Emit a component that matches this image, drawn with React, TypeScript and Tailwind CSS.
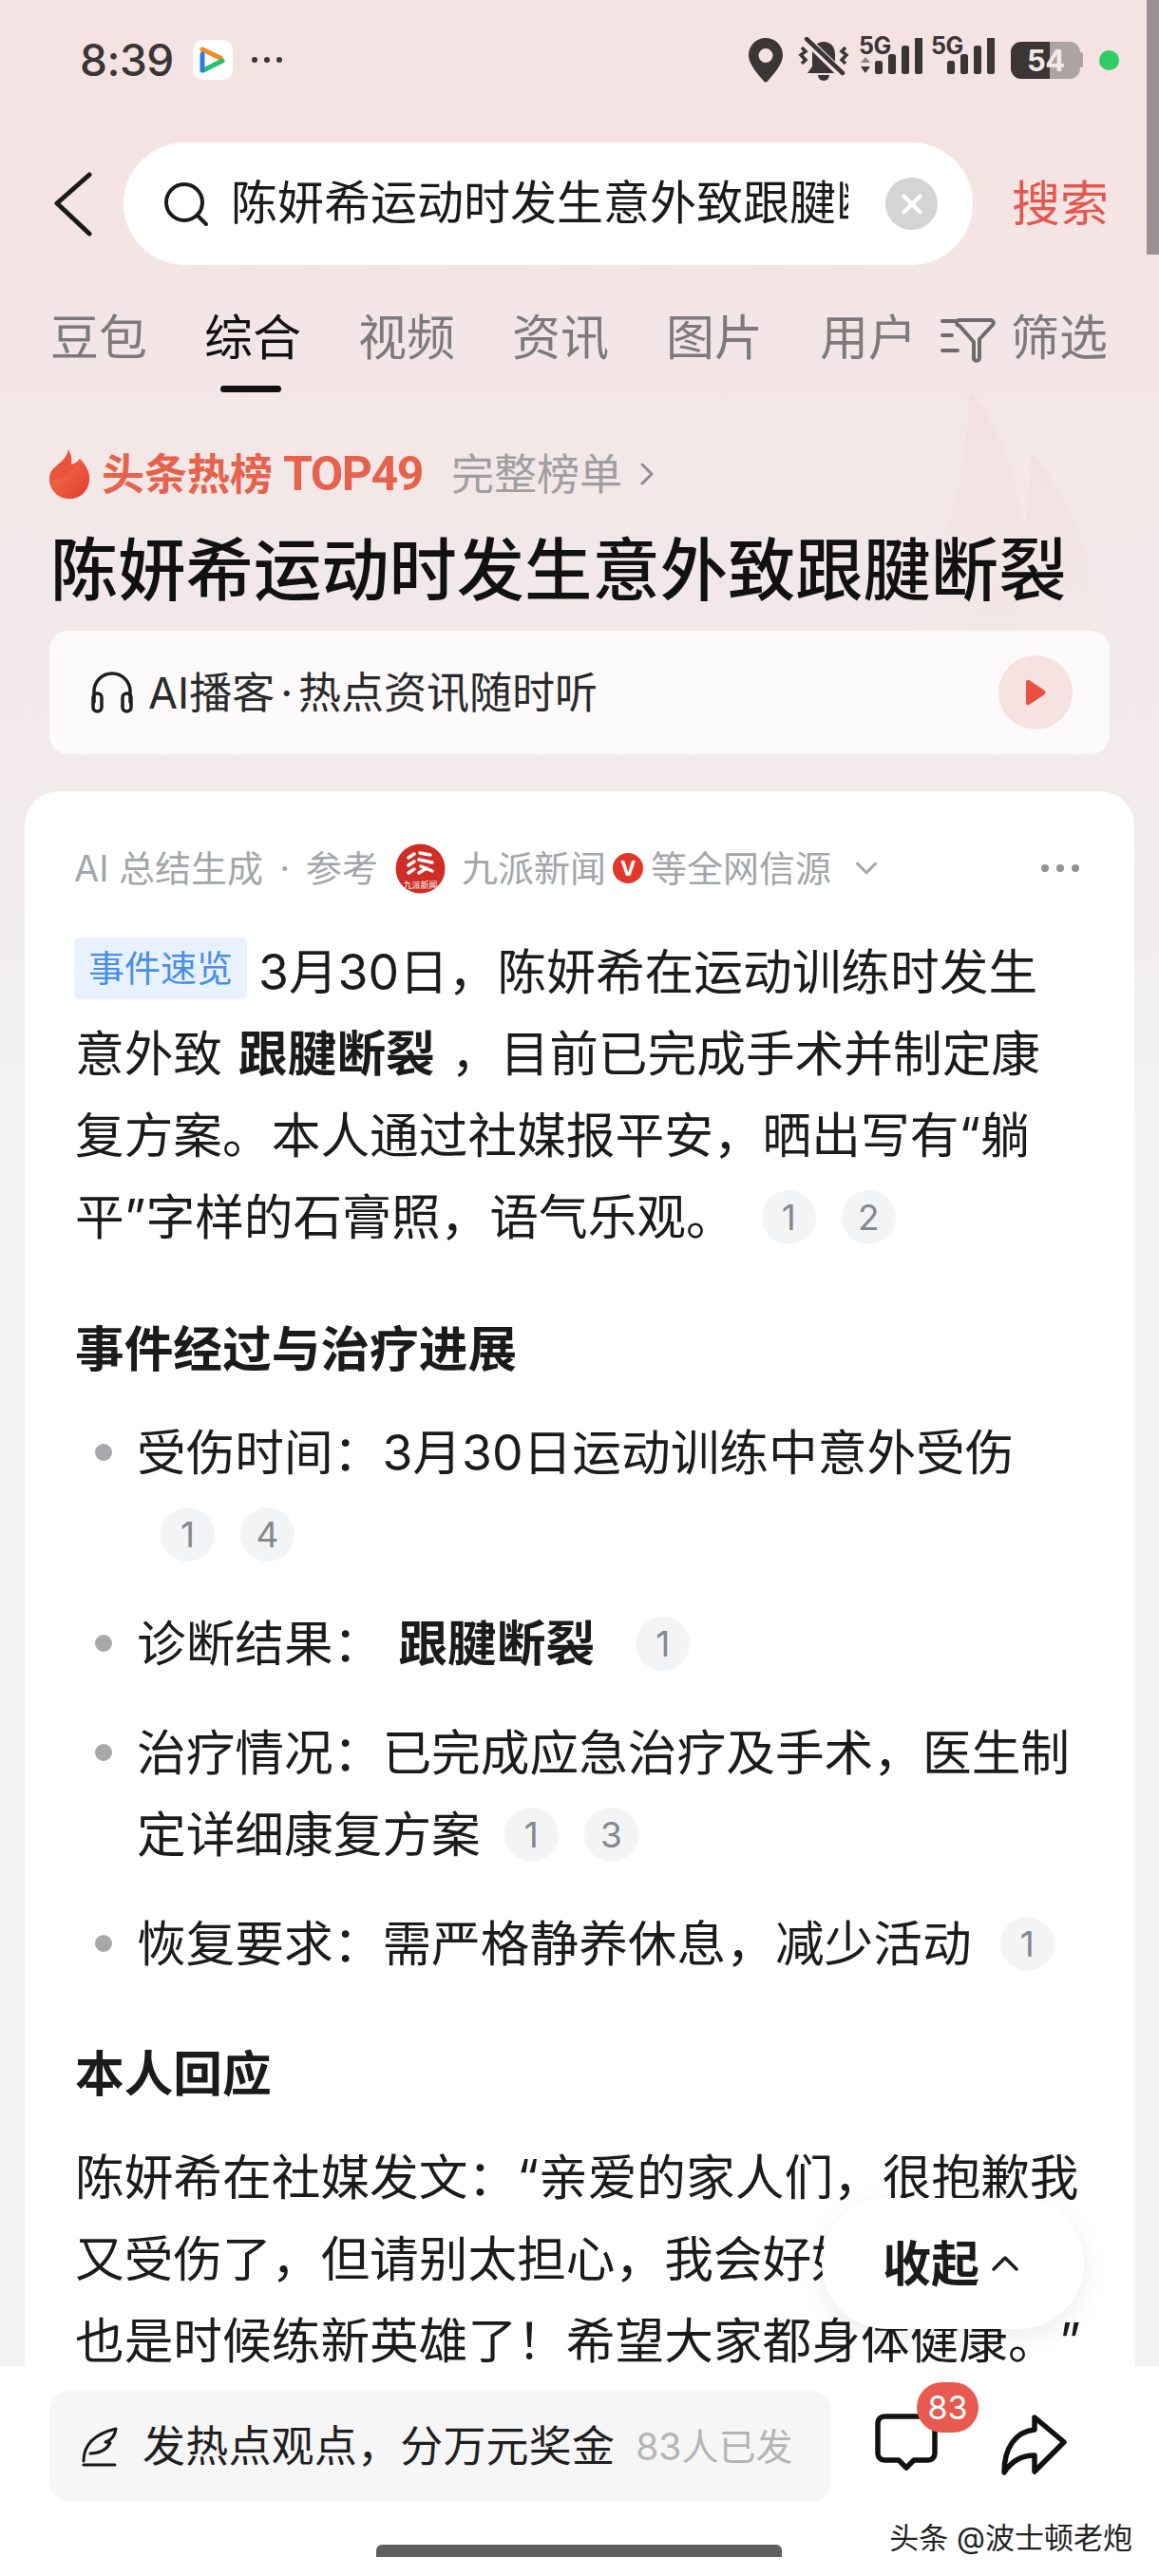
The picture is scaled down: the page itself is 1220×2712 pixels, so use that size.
import { ChevronDown, ChevronRight, X } from 'lucide-react'

const Cite = ({ n }: { n: number }) => (
  <span className="relative -top-[4px] inline-flex w-[57px] h-[57px] rounded-full bg-[#f3f4f5] text-[#85888d] text-[37px] leading-none items-center justify-center align-middle ml-[27px] first:ml-0">
    {n}
  </span>
)

const Signal = ({ arrows }: { arrows?: boolean }) => (
  <div className="relative w-[68px] h-[46px]">
    <span className="absolute left-0 top-[-5px] text-[25px] leading-[26px] font-bold tracking-[-0.5px] text-[#3b3535]">5G</span>
    <svg width="68" height="46" viewBox="0 0 68 46" fill="#3b3535">
      {arrows && <path d="M2 30 L12 30 L7 37 Z" fill="#3b3535" />}
      {arrows && <path d="M2 26 L7 20 L12 26 Z" fill="#8d8585" />}
      <rect x="17" y="24" width="8" height="14" rx="2.5" />
      <rect x="31" y="17" width="8" height="21" rx="2.5" />
      <rect x="45" y="8" width="8" height="30" rx="2.5" />
      <rect x="59" y="-2" width="8" height="40" rx="2.5" />
    </svg>
  </div>
)

const StatusBar = () => (
  <div className="h-[126px] flex items-center pl-[84px] pr-[42px] text-[#3b3535]">
    <span className="text-[46px] leading-none font-medium tracking-[-0.5px]">8:39</span>
    <div className="w-[42px] h-[42px] rounded-[10px] bg-white ml-[20px] flex items-center justify-center">
      <svg width="30" height="32" viewBox="0 0 30 32" fill="none" strokeLinecap="round" strokeWidth="5">
        <path d="M4 5 L23 14" stroke="#f08a24" />
        <path d="M25 17 L5 27" stroke="#25c26e" />
        <path d="M4 10 L4 27" stroke="#2a7de1" />
      </svg>
    </div>
    <div className="flex gap-[7px] ml-[20px]">
      <span className="w-[6px] h-[6px] rounded-full bg-[#3b3535]" />
      <span className="w-[6px] h-[6px] rounded-full bg-[#3b3535]" />
      <span className="w-[6px] h-[6px] rounded-full bg-[#3b3535]" />
    </div>
    <div className="ml-auto flex items-center">
      <svg width="38" height="48" viewBox="0 0 38 48">
        <path fillRule="evenodd" fill="#3b3535" d="M19 1C9 1 1 9 1 19c0 10 10 20 16 27.500a2.600 2.600 0 0 0 4 0C27 39 37 29 37 19 37 9 29 1 19 1Zm0 11a7.500 7.500 0 1 1 0 15 7.500 7.500 0 0 1 0-15Z" />
      </svg>
      <svg className="ml-[15px]" width="54" height="48" viewBox="0 0 54 48" fill="none">
        <path fill="#3b3535" d="M27 5c7 0 12 5 12 13v11l5 9H10l5-7V18c0-8 5-13 12-13Z" />
        <path fill="#3b3535" d="M21 40h12a6 6 0 0 1-12 0Z" />
        <path d="M8 2 L47 40" stroke="#f5e3e3" strokeWidth="9" />
        <path d="M9 2 L47 38" stroke="#3b3535" strokeWidth="4.500" strokeLinecap="round" />
        <path d="M4 11l4 4-5 4 5 5-4 4" stroke="#3b3535" strokeWidth="3.500" />
        <path d="M50 11l-4 4 5 4-5 5 4 4" stroke="#3b3535" strokeWidth="3.500" />
      </svg>
      <div className="ml-[10px]"><Signal arrows /></div>
      <div className="ml-[8px]"><Signal /></div>
      <div className="relative ml-[16px] w-[76px] h-[39px] flex">
        <div className="w-[41px] h-full bg-[#3b3535] rounded-l-[11px]" />
        <div className="w-[32px] h-full bg-[#ada3a2] rounded-r-[11px]" />
        <div className="w-[3px] h-[16px] bg-[#ada3a2] rounded-r-[2px] self-center" />
        <span className="absolute left-[17px] top-0 text-[31px] leading-[39px] font-bold text-[#f2e8e6] tracking-[-0.5px]">54</span>
      </div>
      <span className="w-[21px] h-[21px] rounded-full bg-[#2fcb64] ml-[17px]" />
    </div>
  </div>
)

const SearchRow = () => (
  <div className="mt-[24px] h-[129px] flex items-center">
    <svg className="ml-[57px]" width="40" height="68" viewBox="0 0 40 68" fill="none" stroke="#1a1a1a" strokeWidth="5" strokeLinecap="round" strokeLinejoin="round">
      <path d="M37 3 3 33l34 32" />
    </svg>
    <div className="ml-[33px] w-[894px] h-full rounded-full bg-white flex items-center">
      <svg className="ml-[42px]" width="48" height="48" viewBox="0 0 48 48" fill="none" stroke="#1a1a1a" strokeWidth="4" strokeLinecap="round">
        <circle cx="22" cy="22" r="19" />
        <path d="M36 36l9 9" />
      </svg>
      <div className="ml-[23px] w-[650px] h-[62px] overflow-hidden whitespace-nowrap text-[49px] leading-[60px] text-[#1a1a1a]">
        陈妍希运动时发生意外致跟腱断裂
      </div>
      <div className="ml-[39px] w-[55px] h-[55px] rounded-full bg-[#d4d4d6] flex items-center justify-center">
        <X className="w-[34px] h-[34px] text-white" strokeWidth={3} />
      </div>
    </div>
    <span className="ml-[41px] text-[51px] leading-none text-[#e5574d]">搜索</span>
  </div>
)

const TabBar = () => (
  <div className="mt-[44px] h-[90px] flex pl-[53px] text-[51px] leading-[66px] text-[#7d7a7b]">
    <div className="flex gap-[60px]">
      <span>豆包</span>
      <div className="relative text-[#111]">
        综合
        <span className="absolute left-[17px] top-[83px] w-[64px] h-[7px] rounded-full bg-[#111]" />
      </div>
      <span>视频</span>
      <span>资讯</span>
      <span>图片</span>
      <span>用户</span>
    </div>
    <div className="flex items-start ml-[25px]">
      <svg className="mt-[10px]" width="58" height="50" viewBox="0 0 58 50" fill="none" stroke="#6f6c6d" strokeWidth="4" strokeLinecap="round" strokeLinejoin="round">
        <path d="M2 5h14M2 20h10M2 36h16" />
        <path d="M20 4h33a3 3 0 0 1 2 5L41 24v20a3 3 0 0 1-5 2l-1-1V27L20 10a3 3 0 0 1 0-6Z" />
      </svg>
      <span className="ml-[16px]">筛选</span>
    </div>
  </div>
)

const HotRow = () => (
  <div className="mt-[56px] h-[60px] flex items-center pl-[52px]">
    <svg width="42" height="52" viewBox="0 0 42 52">
      <defs>
        <linearGradient id="flameA" x1="0" y1="0" x2="1" y2="1">
          <stop offset="0" stopColor="#f2754e" />
          <stop offset="1" stopColor="#e23a2c" />
        </linearGradient>
      </defs>
      <path fill="#e8553a" d="M20 0c3 6 4 10 3 16 4-1 7-3 9-6 6 6 10 13 10 21 0 12-9 21-21 21S0 43 0 31c0-6 3-10 8-14 6-5 11-10 12-17Z" />
      <path fill="url(#flameA)" d="M2 32c5-1 12-1 18-6 5-4 9-9 12-16 6 6 10 13 10 21 0 12-9 21-21 21-10 0-19-8-19-20Z" />
    </svg>
    <span className="ml-[13px] text-[45px] leading-none font-bold text-[#e5634c]">头条热榜</span>
    <span className="ml-[11px] text-[50px] leading-none font-bold text-[#e5634c] font-['Roboto',sans-serif] tracking-[-1.500px]">TOP49</span>
    <span className="ml-[30px] text-[45px] leading-none text-[#a09e9f]">完整榜单</span>
    <ChevronRight className="ml-[6px] w-[40px] h-[40px] text-[#8f8d8e]" strokeWidth={1.8} />
  </div>
)

const PodcastCard = () => (
  <div className="mt-[19px] mx-[52px] h-[130px] rounded-[20px] bg-white/75 flex items-center pl-[43px] pr-[39px]">
    <svg width="46" height="44" viewBox="0 0 46 44" fill="none" stroke="#1f1f1f" strokeWidth="3.500" strokeLinecap="round">
      <path d="M4 32V21a19 19 0 0 1 38 0v11" />
      <rect x="3" y="23" width="9" height="19" rx="4.500" />
      <rect x="34" y="23" width="9" height="19" rx="4.500" />
    </svg>
    <span className="ml-[15px] text-[45px] leading-none text-[#2a2a2a]">AI播客<span className="mx-[6px]">·</span>热点资讯随时听</span>
    <div className="ml-auto w-[78px] h-[78px] rounded-full bg-[#f6e3e1] flex items-center justify-center">
      <svg width="24" height="28" viewBox="0 0 24 28"><path fill="#e9503f" d="M2 3.500C2 1 4 0 6 1.500l15 10c2 1.300 2 3.700 0 5l-15 10C4 28 2 27 2 24.500Z" /></svg>
    </div>
  </div>
)

const SourceRow = () => (
  <div className="h-[50px] -ml-[1px] mr-[28px] flex items-center text-[38px] leading-none text-[#a3a6aa]">
    <span>AI 总结生成</span>
    <span className="ml-[17px]">·</span>
    <span className="ml-[17px]">参考</span>
    <svg className="ml-[18px]" width="53" height="53" viewBox="0 0 53 53">
      <circle cx="26.500" cy="26.500" r="26" fill="#cf2d25" />
      <g stroke="#fff" strokeWidth="3.500" strokeLinecap="round">
        <path d="M20 11l-6 4M20 19l-6 4M20 27l-6 4M26 10l11 2M25 17l14 3M27 24l12 5M25 31l8-5" />
      </g>
      <text x="26.500" y="47" textAnchor="middle" fontSize="9" fill="#fff">九派新闻</text>
    </svg>
    <span className="ml-[17px]">九派新闻</span>
    <span className="ml-[7px] w-[32px] h-[32px] rounded-full bg-[#e0372a] text-white text-[22px] font-bold flex items-center justify-center">V</span>
    <span className="ml-[8px]">等全网信源</span>
    <ChevronDown className="ml-[18px] w-[38px] h-[38px] text-[#a3a6aa]" strokeWidth={2} />
    <div className="ml-auto flex gap-[8px]">
      <span className="w-[8px] h-[8px] rounded-full bg-[#8f9296]" />
      <span className="w-[8px] h-[8px] rounded-full bg-[#8f9296]" />
      <span className="w-[8px] h-[8px] rounded-full bg-[#8f9296]" />
    </div>
  </div>
)

const Bullet = ({ children }: { children: React.ReactNode }) => (
  <li className="relative pl-[65px]">
    <span className="absolute left-[21px] top-[34px] w-[18px] h-[18px] rounded-full bg-[#a8a8aa]" />
    {children}
  </li>
)

const Summary = () => (
  <div className="mx-[26px] rounded-t-[36px] bg-white pt-[56px] pl-[53px] pr-[30px] whitespace-nowrap text-[51.700px] leading-[86px] text-[#1b1b1b]">
    <SourceRow />
    <p className="mt-[41px]">
      <span className="inline-flex h-[65px] w-[182px] mr-[12px] -ml-[1px] rounded-[6px] bg-[#e8f2fe] text-[#4a8fe7] text-[38px] leading-none items-center justify-center align-[9px]">事件速览</span>
      3月30日，陈妍希在运动训练时发生<br />
      意外致<b className="font-bold mx-[17px]">跟腱断裂</b>，目前已完成手术并制定康<br />
      复方案。本人通过社媒报平安，晒出写有“躺<br />
      平”字样的石膏照，语气乐观。
      <span className="ml-[28px]"><Cite n={1} /><Cite n={2} /></span>
    </p>
    <h3 className="mt-[53px] font-bold">事件经过与治疗进展</h3>
    <ul className="mt-[23px] flex flex-col gap-[29px]">
      <Bullet>
        受伤时间：3月30日运动训练中意外受伤<br />
        <span className="ml-[25px]"><Cite n={1} /><Cite n={4} /></span>
      </Bullet>
      <Bullet>
        诊断结果：<b className="font-bold ml-[17px] mr-[16px]">跟腱断裂</b><Cite n={1} />
      </Bullet>
      <Bullet>
        治疗情况：已完成应急治疗及手术，医生制<br />
        定详细康复方案<span className="ml-[25px]"><Cite n={1} /><Cite n={3} /></span>
      </Bullet>
      <Bullet>
        恢复要求：需严格静养休息，减少活动<span className="ml-[30px]"><Cite n={1} /></span>
      </Bullet>
    </ul>
    <h3 className="mt-[51px] font-bold">本人回应</h3>
    <p className="mt-[23px]">
      陈妍希在社媒发文：“亲爱的家人们，很抱歉我<br />
      又受伤了，但请别太担心，我会好好养伤，这<br />
      也是时候练新英雄了！希望大家都身体健康。<span className="ml-[28px]">”</span>
    </p>
  </div>
)

const BottomBar = () => (
  <div className="relative h-[221px] shrink-0 bg-white pt-[26px] pl-[52px]">
    <div className="flex items-start">
      <div className="w-[823px] h-[117px] rounded-[22px] bg-[#f6f6f7] flex items-center pl-[33px]">
        <svg width="40" height="42" viewBox="0 0 40 42" fill="none" stroke="#1a1a1a" strokeWidth="3" strokeLinecap="round" strokeLinejoin="round">
          <path d="M3 36C3 20 12 8 37 2c-1 8-5 12-11 14 2 0 4 0 5 1-4 7-11 11-21 11" />
          <path d="M3 40h33" />
        </svg>
        <span className="ml-[25px] text-[45px] leading-none tracking-[0.2px] text-[#1f1f1f]">发热点观点，分万元奖金</span>
        <span className="ml-[22px] text-[39px] leading-none text-[#b4b4b6]">83人已发</span>
      </div>
      <div className="relative ml-[46px] mt-[24px] w-[66px] h-[60px]">
        <svg width="68" height="62" viewBox="0 0 68 62" fill="none" stroke="#111" strokeWidth="5.500" strokeLinejoin="round">
          <path d="M10 3h46a7 7 0 0 1 7 7v32a7 7 0 0 1-7 7H41l-8 8-8-8H10a7 7 0 0 1-7-7V10a7 7 0 0 1 7-7Z" />
        </svg>
        <span className="absolute left-[44px] top-[-33px] w-[65px] h-[53px] rounded-full bg-[#e85a4f] text-white text-[34px] leading-none flex items-center justify-center">83</span>
      </div>
      <svg className="ml-[67px] mt-[25px]" width="70" height="64" viewBox="0 0 70 64" fill="none" stroke="#111" strokeWidth="5.500" strokeLinejoin="round">
        <path d="M35 3 66 29 35 60V43C20 43 10 50 3 61 3 35 15 18 35 16Z" />
      </svg>
    </div>
    <span className="absolute right-[28px] top-[161px] text-[31px] leading-[40px] text-[#222] [text-shadow:1px_1px_1px_#fff]">头条 @波士顿老炮</span>
    <div className="absolute left-[396px] top-[188px] w-[427px] h-[13px] rounded-t-[6px] bg-[#5f5f5f]" />
  </div>
)

export default function App() {
  return (
    <div className="relative w-[1220px] h-[2712px] overflow-hidden flex flex-col font-['Inter','Noto_Sans_CJK_SC',sans-serif] bg-gradient-to-b from-[#f5e2e2] via-[#f2eaeb] via-30% to-[#f2f3f5] to-45%">
      {/* faint flames behind the hot list header */}
      <svg className="absolute left-[960px] top-[412px]" width="230" height="300" viewBox="0 0 230 300">
        <defs>
          <linearGradient id="fadeFlame" x1="0" y1="0" x2="0" y2="1">
            <stop offset="0" stopColor="#f0d9d6" stopOpacity="0.45" />
            <stop offset="1" stopColor="#f2e4e0" stopOpacity="0" />
          </linearGradient>
        </defs>
        <path fill="url(#fadeFlame)" d="M60 0c30 30 55 90 58 170 4 60-10 110-40 150H10C-10 260 10 210 30 160 50 110 60 50 60 0Z" />
        <path fill="url(#fadeFlame)" d="M125 62c40 50 70 120 70 180 0 30-6 60-20 78H55c-14-40 0-80 30-110 30-30 42-90 40-148Z" />
      </svg>

      <div className="relative flex-1 overflow-hidden">
        <StatusBar />
        <SearchRow />
        <TabBar />
        <HotRow />
        <h1 className="mt-[26px] pl-[53px] text-[71.300px] leading-[90px] font-medium text-[#111] whitespace-nowrap">陈妍希运动时发生意外致跟腱断裂</h1>
        <PodcastCard />
        <div className="h-[39px]" />
        <Summary />
      </div>

      <BottomBar />

      {/* scroll indicator */}
      <div className="absolute right-0 top-0 w-[13px] h-[268px] bg-[#9b9094]" />

      {/* floating collapse button */}
      <div className="absolute left-[865px] top-[2314px] w-[276px] h-[138px] rounded-full bg-white shadow-[0_8px_30px_rgba(0,0,0,0.08)] flex items-center pl-[64px]">
        <span className="text-[51px] leading-none font-bold text-[#1b1b1b]">收起</span>
        <svg className="ml-[12px]" width="30" height="18" viewBox="0 0 30 18" fill="none" stroke="#1b1b1b" strokeWidth="3.500" strokeLinecap="round" strokeLinejoin="round">
          <path d="M3 15 15 3l12 12" />
        </svg>
      </div>
    </div>
  )
}
